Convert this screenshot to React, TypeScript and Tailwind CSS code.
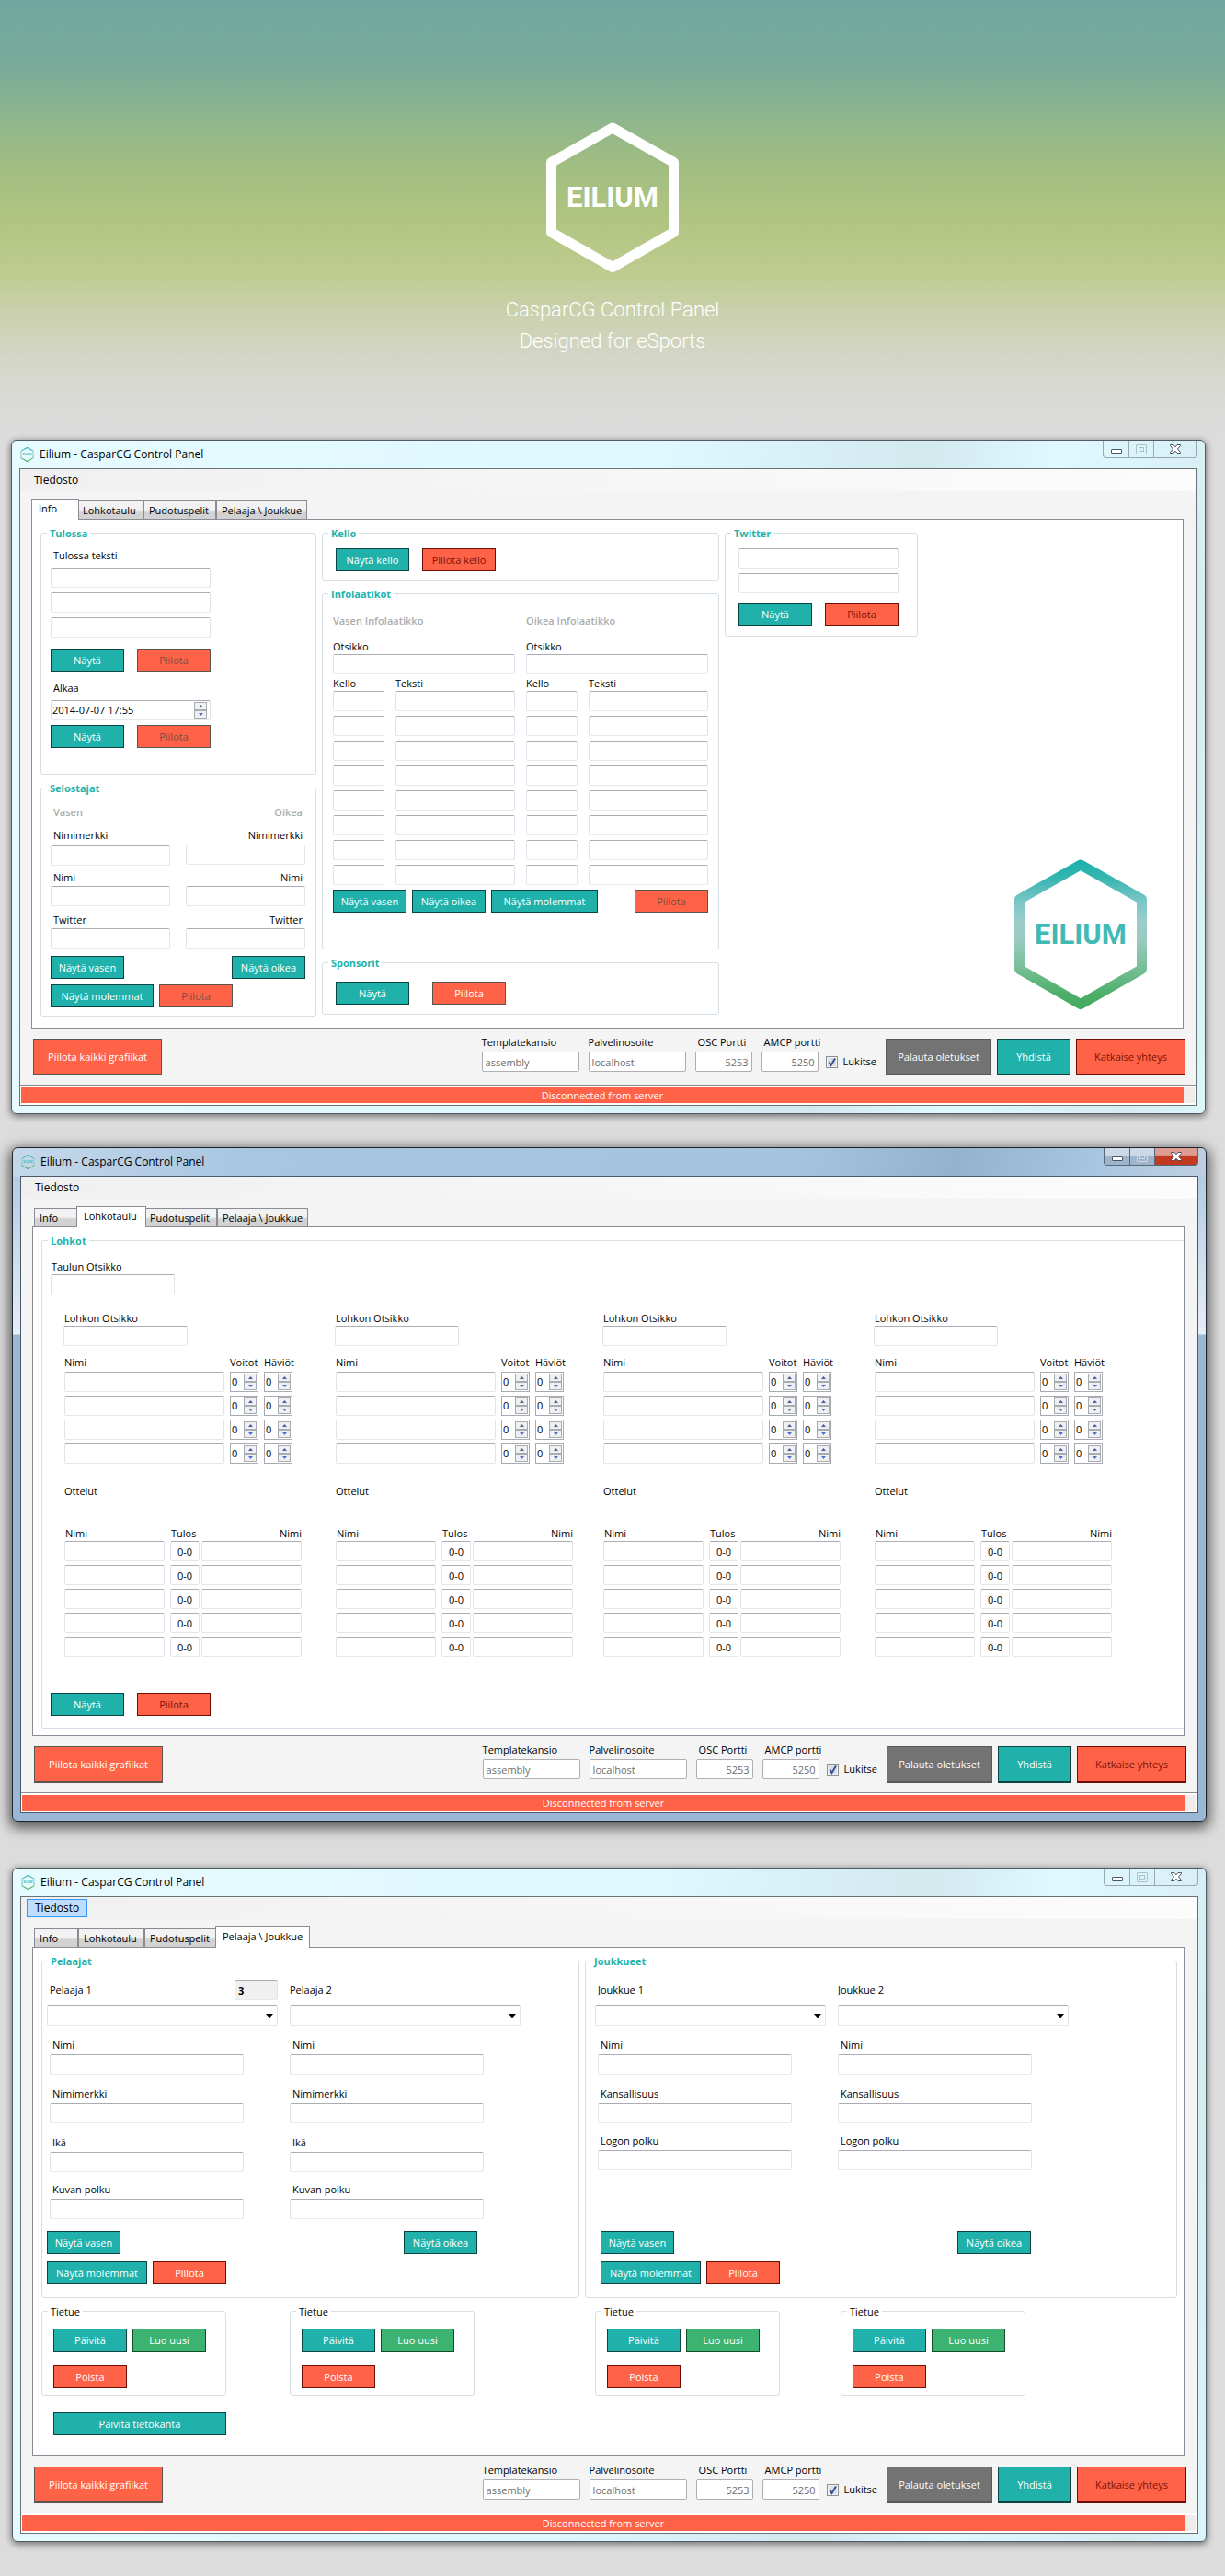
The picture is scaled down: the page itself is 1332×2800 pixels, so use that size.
import { useId, type ReactNode } from "react";
import clsx from "clsx";

type Theme = "light" | "blue";

const fieldEdge = "rounded-[2px] border border-x-[#e2e3ea] border-b-[#e3e9ef] border-t-[#abadb3]";
const fieldBorder = "rounded-[2px] border border-x-[#e2e3ea] border-b-[#e3e9ef] border-t-[#abadb3] bg-white";

function Hexagon({ gradient, small }: { gradient?: boolean; small?: boolean }) {
  const id = useId();
  return (
    <svg
      viewBox="0 0 144 163"
      className={small ? "h-4 w-[15px] shrink-0" : "h-[163px] w-36 shrink-0"}
      role="img"
      aria-label="Eilium"
    >
      <defs>
        <linearGradient id={id} x1="0" y1="0" x2="0" y2="163" gradientUnits="userSpaceOnUse">
          <stop offset="0.02" stopColor="#1fb0a9" />
          <stop offset="0.12" stopColor="#34b5b0" />
          <stop offset="0.28" stopColor="#7ac6c8" />
          <stop offset="0.42" stopColor="#9bcdcb" />
          <stop offset="0.54" stopColor="#97cbbf" />
          <stop offset="0.72" stopColor="#78bf97" />
          <stop offset="0.9" stopColor="#4eae69" />
          <stop offset="1" stopColor="#43a95e" />
        </linearGradient>
      </defs>
      <path
        d="M72 6 138.5 43.5V119.5L72 157.5 5.5 119.5V43.5Z"
        fill="none"
        stroke={gradient ? `url(#${id})` : "#ffffff"}
        strokeWidth="11"
        strokeLinejoin="round"
      />
      <text
        x="72"
        y="92"
        textAnchor="middle"
        fill={gradient ? "#41bab5" : "#ffffff"}
        fontSize="31"
        fontWeight="700"
        fontFamily="Roboto, sans-serif"
      >
        EILIUM
      </text>
    </svg>
  );
}

type Tone = "teal" | "green" | "gray" | "red" | "redDark" | "redMuted" | "redGray";

const tones: Record<Tone, string> = {
  teal: "border-[#0b4442] bg-[#20b2aa] text-white",
  green: "border-[#124d2c] bg-[#3cb371] text-white",
  gray: "border-[#585858] bg-[#737373] text-white",
  red: "border-[#6e0f05] bg-[#ff6347] text-white",
  redDark: "border-[#6e0f05] bg-[#ff6347] text-[#7b1208]",
  redMuted: "border-[#5c5450] bg-[#ff6347] text-[#7d4b40]",
  redGray: "border-[#5c5450] bg-[#ff6347] text-white",
};

function Btn({ tone = "teal", w = "w-20", big, children }: { tone?: Tone; w?: string; big?: boolean; children: ReactNode }) {
  return (
    <button
      type="button"
      className={clsx(
        "shrink-0 whitespace-nowrap border text-center text-[11px] leading-4",
        big ? "h-10 border-b-2" : "h-[25px]",
        tones[tone],
        w,
      )}
    >
      {children}
    </button>
  );
}

function Box({ w = "w-full", label, value, center, id }: { w?: string; label?: string; value?: string; center?: boolean; id?: string }) {
  return (
    <input
      id={id}
      type="text"
      aria-label={label}
      defaultValue={value}
      className={clsx("block h-[22px] min-w-0 px-[3px] text-[11px] leading-4 text-black", fieldBorder, center && "text-center", w)}
    />
  );
}

function Field({
  label,
  w = "w-full",
  gap = "gap-0",
  right,
  indent = "px-[3px]",
}: {
  label: string;
  w?: string;
  gap?: string;
  right?: boolean;
  indent?: string;
}) {
  const id = useId();
  return (
    <div className={clsx("flex flex-col", gap, w)}>
      <label htmlFor={id} className={clsx("leading-4", indent, right && "text-right")}>
        {label}
      </label>
      <Box id={id} />
    </div>
  );
}

function Group({ title, className, plain, children }: { title: string; className?: string; plain?: boolean; children: ReactNode }) {
  return (
    <fieldset className={clsx("shrink-0 rounded-[3px] border border-[#d5dfe5]", className)}>
      <legend className={clsx("ml-[6px] px-[3px] leading-[15px]", !plain && "font-bold text-[#24b3ab]")}>{title}</legend>
      {children}
    </fieldset>
  );
}

function Steppers({ label }: { label: string }) {
  const cls = "flex h-[9px] w-[14px] items-center justify-center border border-[#a9abb2] bg-[#f0f0f1]";
  return (
    <span className="flex shrink-0 flex-col">
      <button type="button" aria-label={`${label} +`} className={cls}>
        <svg viewBox="0 0 5 3" className="h-[3px] w-[5px]">
          <path d="M0 3 2.5 0 5 3Z" fill="#4a5fa8" />
        </svg>
      </button>
      <button type="button" aria-label={`${label} -`} className={cls}>
        <svg viewBox="0 0 5 3" className="h-[3px] w-[5px]">
          <path d="M0 0 2.5 3 5 0Z" fill="#4a6fd0" />
        </svg>
      </button>
    </span>
  );
}

function Counter({ label }: { label: string }) {
  return (
    <span className="flex h-[22px] w-[31px] items-center border border-[#a9abb2] bg-white pr-px">
      <input type="text" aria-label={label} defaultValue="0" className="w-[14px] min-w-0 pl-px text-[11px] leading-4" />
      <Steppers label={label} />
    </span>
  );
}

function Check() {
  const id = useId();
  return (
    <div className="ml-2 mr-[10px] mt-[29px] flex h-[14px] items-center gap-[6px]">
      <span className="relative flex size-[13px]">
        <input
          id={id}
          type="checkbox"
          defaultChecked
          className="peer size-[13px] appearance-none border border-[#8e8f8f] bg-[#d9dfe6] shadow-[inset_0_0_0_1px_#f4f4f4]"
        />
        <svg viewBox="0 0 13 13" className="pointer-events-none absolute inset-0 hidden size-[13px] peer-checked:block">
          <path d="M3.5 6.5 5.5 10 10 2.5" fill="none" stroke="#3f4f96" strokeWidth="2" />
        </svg>
      </span>
      <label htmlFor={id} className="leading-4">
        Lukitse
      </label>
    </div>
  );
}

function FooterField({ label, value, w, right }: { label: string; value: string; w: string; right?: boolean }) {
  const id = useId();
  return (
    <div className={clsx("flex flex-col gap-[2px] pt-[7px]", w)}>
      <label htmlFor={id} className={clsx("whitespace-nowrap leading-4", right && "pl-[3px]")}>
        {label}
      </label>
      <input
        id={id}
        type="text"
        disabled
        defaultValue={value}
        className={clsx(
          "block h-[22px] w-full min-w-0 rounded-[2px] border border-[#afafb3] bg-white px-[3px] text-[11px] leading-4 text-[#6d6d6d]",
          right && "text-right",
        )}
      />
    </div>
  );
}

function CaptionButtons({ theme }: { theme: Theme }) {
  const blue = theme === "blue";
  const edge = blue ? "border-[#56687c]" : "border-[#96a9ae]";
  const face = blue ? "bg-linear-to-b from-[#cdd9e6] from-45% to-[#9fb3c9] to-50%" : "";
  return (
    <div className={clsx("flex h-[19px] overflow-hidden rounded-b-[4px] border border-t-0", edge)}>
      <button type="button" aria-label="Minimize" className={clsx("flex w-7 items-end justify-center border-r pb-1", edge, face)}>
        <svg viewBox="0 0 12 5" className="h-[5px] w-3">
          <rect x="0.5" y="0.5" width="11" height="4" rx="0.5" fill="#fff" stroke="#4b5566" />
        </svg>
      </button>
      <button type="button" aria-label="Maximize" className={clsx("flex w-[27px] items-center justify-center border-r", edge, face)}>
        <svg viewBox="0 0 12 11" className="h-[11px] w-3" fill="none" stroke={blue ? "#cfd9e4" : "#adc2c7"}>
          <rect x="0.5" y="0.5" width="11" height="10" rx="0.5" />
          <rect x="3.5" y="3.5" width="5" height="4" />
        </svg>
      </button>
      <button
        type="button"
        aria-label="Close"
        className={clsx("flex w-[46px] items-center justify-center", blue && "bg-linear-to-b from-[#dc9d90] from-40% to-[#c13a20] to-50%")}
      >
        <svg viewBox="0 0 12 10" className="h-[10px] w-3">
          <path
            d="M0.500 0.500H4L6 2.800 8 0.500H11.500V1.500L8.500 5 11.500 8.500V9.500H8L6 7.200 4 9.500H0.500V8.500L3.500 5 0.500 1.500Z"
            fill="#fff"
            stroke="#4b5060"
          />
        </svg>
      </button>
    </div>
  );
}

const tabs = [
  { name: "Info", w: "w-12", activeW: "w-[52px]" },
  { name: "Lohkotaulu", w: "w-[72px]", activeW: "w-[76px]" },
  { name: "Pudotuspelit", w: "w-[79px]", activeW: "w-[83px]" },
  { name: "Pelaaja \\ Joukkue", w: "w-[99px]", activeW: "w-[103px]" },
];

function Window({
  theme = "light",
  tab,
  menuOpen,
  className,
  children,
}: {
  theme?: Theme;
  tab: number;
  menuOpen?: boolean;
  className: string;
  children: ReactNode;
}) {
  const blue = theme === "blue";
  return (
    <section
      className={clsx(
        "rounded-[6px] border px-2 pb-2",
        blue
          ? "border-[#20262e] bg-[linear-gradient(to_bottom,transparent_0,transparent_31px,#b4cce4_31px,#e6eef7_202px,#9ab8d6_203px,#9ab8d6_100%),linear-gradient(100deg,#c4d8ea_0,#a8c5e1_18%,#a5c3df_60%,#95b2cc_72%,#a7c4df_82%,#c3d3e2_94%)] shadow-[0_4px_14px_3px_rgba(0,0,0,0.6)]"
          : "border-[#525c60] bg-[linear-gradient(100deg,#e6fbff_0,#def8fe_50%,#d2e9ee_70%,#dff9ff_80%,#d6edf2_94%,#dcf6fb_100%)] shadow-[0_2px_7px_1px_rgba(0,0,0,0.45)]",
        className,
      )}
    >
      <header className="flex h-[30px] items-start justify-between">
        <div className="flex h-[30px] items-center gap-[6px] pl-px">
          <Hexagon gradient small />
          <h2 className="text-[12px] leading-4">Eilium - CasparCG Control Panel</h2>
        </div>
        <CaptionButtons theme={theme} />
      </header>
      <div className={clsx("border bg-[#f4f4f4]", blue ? "border-[#4b5b6b]" : "border-[#687377]")}>
        <nav className="flex h-6 items-center bg-linear-to-r from-[#f0f0f0] to-[#fcfcfc] pl-[6px]">
          <button
            type="button"
            className={clsx("h-5 border px-2 text-[12px] leading-4", menuOpen ? "border-[#3399ff] bg-[#bfddff]" : "border-transparent")}
          >
            Tiedosto
          </button>
        </nav>
        <div role="tablist" className="ml-[14px] mt-2 flex h-[22px] items-end">
          {tabs.map((t, i) => (
            <button
              key={t.name}
              type="button"
              role="tab"
              aria-selected={i === tab}
              className={clsx(
                "shrink-0 whitespace-nowrap border border-b-0 border-[#898c95] text-left text-[11px] leading-4",
                i === tab
                  ? "relative z-10 -mx-[2px] -mb-px h-[23px] bg-white pb-[2px] pl-[7px]"
                  : "h-5 bg-linear-to-b from-[#f2f2f2] from-45% to-[#d2d2d2] to-60% pl-[5px]",
                i === tab ? t.activeW : t.w,
              )}
            >
              {t.name}
            </button>
          ))}
        </div>
        <div role="tabpanel" className="ml-3 mr-[14px] min-h-[554px] border border-[#898c95] bg-white pl-[9px] pt-[7px]">
          {children}
        </div>
        <div className="flex h-[61px] items-start justify-between pl-[14px] pr-3">
          <div className="pt-[11px]">
            <Btn tone="redGray" w="w-[140px]" big>
              Piilota kaikki grafiikat
            </Btn>
          </div>
          <div className="flex items-start">
            <div className="flex gap-[10px]">
              <FooterField label="Templatekansio" value="assembly" w="w-[106px]" />
              <FooterField label="Palvelinosoite" value="localhost" w="w-[106px]" />
              <FooterField label="OSC Portti" value="5253" w="w-[62px]" right />
              <FooterField label="AMCP portti" value="5250" w="w-[62px]" right />
            </div>
            <Check />
            <div className="flex gap-[6px] pt-[11px]">
              <Btn tone="gray" w="w-[115px]" big>
                Palauta oletukset
              </Btn>
              <Btn w="w-20" big>
                Yhdistä
              </Btn>
              <Btn tone="redDark" w="w-[119px]" big>
                Katkaise yhteys
              </Btn>
            </div>
          </div>
        </div>
        <div className="border-t border-[#8a8c8e] bg-white py-[2px] pl-px pr-[2px]">
          <div className="bg-[#f0eceb] pr-3">
            <p className="h-[17px] bg-[#ff6347] text-center leading-[17px] text-white">Disconnected from server</p>
          </div>
        </div>
      </div>
    </section>
  );
}

function InfoColumn({ title }: { title: string }) {
  return (
    <div className="flex w-[198px] flex-col">
      <h3 className="font-semibold leading-4 text-[#adadad]">{title}</h3>
      <div className="mt-3">
        <Field label="Otsikko" indent="px-0" />
      </div>
      <div className="mt-[2px] grid grid-cols-[56px_130px] gap-x-3 leading-4">
        <span>Kello</span>
        <span>Teksti</span>
      </div>
      <div className="grid grid-cols-[56px_130px] gap-x-3 gap-y-[5px]">
        {Array.from({ length: 8 }, (_, i) => [
          <Box key={`k${i}`} label={`${title} kello ${i + 1}`} />,
          <Box key={`t${i}`} label={`${title} teksti ${i + 1}`} />,
        ])}
      </div>
    </div>
  );
}

function InfoTab() {
  const first = useId();
  const date = useId();
  return (
    <div className="flex gap-[6px]">
      <div className="flex w-[300px] shrink-0 flex-col gap-[7px]">
        <Group title="Tulossa" className="h-[270px]">
          <div className="flex flex-col pl-[10px] pt-[9px]">
            <label htmlFor={first} className="pl-[3px] leading-4">
              Tulossa teksti
            </label>
            <div className="mt-[5px] flex flex-col gap-[5px]">
              <Box w="w-[174px]" id={first} />
              <Box w="w-[174px]" label="Tulossa teksti 2" />
              <Box w="w-[174px]" label="Tulossa teksti 3" />
            </div>
            <div className="mt-3 flex gap-[14px]">
              <Btn>Näytä</Btn>
              <Btn tone="redMuted">Piilota</Btn>
            </div>
            <label htmlFor={date} className="mt-[10px] pl-[3px] leading-4">
              Alkaa
            </label>
            <div className={clsx("mt-[5px] flex h-[22px] w-[174px] items-center pr-[3px]", fieldBorder)}>
              <input id={date} type="text" defaultValue="2014-07-07 17:55" className="min-w-0 flex-1 pl-px text-[11px] leading-4" />
              <Steppers label="Alkaa" />
            </div>
            <div className="mt-[5px] flex gap-[14px]">
              <Btn>Näytä</Btn>
              <Btn tone="redMuted">Piilota</Btn>
            </div>
          </div>
        </Group>
        <Group title="Selostajat" className="h-[256px]">
          <div className="flex w-[287px] flex-col pl-[10px] pt-[11px]">
            <div className="flex justify-between px-[3px] font-semibold leading-4 text-[#adadad]">
              <span>Vasen</span>
              <span>Oikea</span>
            </div>
            <div className="mt-[9px] flex justify-between">
              <Field label="Nimimerkki" w="w-[130px]" gap="gap-[3px]" />
              <Field label="Nimimerkki" w="w-[130px]" gap="gap-[2px]" right />
            </div>
            <div className="mt-[5px] flex justify-between">
              <Field label="Nimi" w="w-[130px]" gap="gap-px" />
              <Field label="Nimi" w="w-[130px]" gap="gap-px" right />
            </div>
            <div className="mt-[7px] flex justify-between">
              <Field label="Twitter" w="w-[130px]" gap="gap-px" />
              <Field label="Twitter" w="w-[130px]" gap="gap-px" right />
            </div>
            <div className="mt-2 flex justify-between">
              <Btn>Näytä vasen</Btn>
              <Btn>Näytä oikea</Btn>
            </div>
            <div className="mt-[6px] flex gap-[6px]">
              <Btn w="w-[112px]">Näytä molemmat</Btn>
              <Btn tone="redMuted">Piilota</Btn>
            </div>
          </div>
        </Group>
      </div>

      <div className="flex w-[432px] shrink-0 flex-col gap-[7px]">
        <Group title="Kello" className="h-[59px]">
          <div className="flex gap-[14px] pl-[14px] pt-[9px]">
            <Btn>Näytä kello</Btn>
            <Btn tone="redDark">Piilota kello</Btn>
          </div>
        </Group>
        <Group title="Infolaatikot" className="h-[394px]">
          <div className="w-[419px] pl-[11px] pt-[14px]">
            <div className="flex gap-3">
              <InfoColumn title="Vasen Infolaatikko" />
              <InfoColumn title="Oikea Infolaatikko" />
            </div>
            <div className="mt-[5px] flex gap-[6px]">
              <Btn>Näytä vasen</Btn>
              <Btn>Näytä oikea</Btn>
              <Btn w="w-[116px]">Näytä molemmat</Btn>
              <div className="ml-auto">
                <Btn tone="redMuted">Piilota</Btn>
              </div>
            </div>
          </div>
        </Group>
        <Group title="Sponsorit" className="h-[64px]">
          <div className="flex gap-[25px] pl-[14px] pt-[13px]">
            <Btn>Näytä</Btn>
            <Btn tone="redGray">Piilota</Btn>
          </div>
        </Group>
      </div>

      <Group title="Twitter" className="h-[120px] w-[210px]">
        <div className="flex flex-col gap-[5px] pl-[14px] pt-[9px]">
          <Box w="w-[174px]" label="Twitter 1" />
          <Box w="w-[174px]" label="Twitter 2" />
          <div className="mt-[5px] flex gap-[14px]">
            <Btn>Näytä</Btn>
            <Btn tone="redDark">Piilota</Btn>
          </div>
        </div>
      </Group>

      <div className="ml-auto mr-[39px] flex flex-col justify-end pb-2">
        <Hexagon gradient />
      </div>
    </div>
  );
}

function Block({ n }: { n: number }) {
  return (
    <div className="flex flex-col">
      <Field label="Lohkon Otsikko" w="w-[135px]" indent="px-px" />
      <div className="mb-[2px] mt-[10px] grid grid-cols-[174px_31px_31px] gap-x-[6px] pl-px leading-4">
        <span>Nimi</span>
        <span>Voitot</span>
        <span>Häviöt</span>
      </div>
      <div className="grid grid-cols-[174px_31px_31px] gap-x-[6px] gap-y-1 pl-px">
        {Array.from({ length: 4 }, (_, i) => [
          <Box key={`n${i}`} label={`Lohko ${n} nimi ${i + 1}`} />,
          <Counter key={`v${i}`} label={`Lohko ${n} voitot ${i + 1}`} />,
          <Counter key={`h${i}`} label={`Lohko ${n} häviöt ${i + 1}`} />,
        ])}
      </div>
      <h3 className="mt-[22px] pl-px leading-4">Ottelut</h3>
      <div className="mt-[30px] grid grid-cols-[115px_34px_109px] pl-[2px] leading-4">
        <span>Nimi</span>
        <span>Tulos</span>
        <span className="pr-px text-right">Nimi</span>
      </div>
      <div className="flex flex-col gap-1 pl-px">
        {Array.from({ length: 5 }, (_, i) => (
          <div key={i} className="flex">
            <Box w="w-[109px]" label={`Lohko ${n} ottelu ${i + 1} vasen`} />
            <div className="ml-[6px] mr-[2px]">
              <Box w="w-8" center value="0-0" label={`Lohko ${n} ottelu ${i + 1} tulos`} />
            </div>
            <Box w="w-[109px]" label={`Lohko ${n} ottelu ${i + 1} oikea`} />
          </div>
        ))}
      </div>
    </div>
  );
}

function LohkoTab() {
  return (
    <Group title="Lohkot" className="h-[538px] rounded-r-none border-r-0">
      <div className="flex flex-col pl-[9px] pt-[13px]">
        <Field label="Taulun Otsikko" w="w-[135px]" indent="px-px" />
        <div className="mt-[18px] grid grid-cols-[295px_291px_295px_auto] pl-[14px]">
          {[1, 2, 3, 4].map((n) => (
            <Block key={n} n={n} />
          ))}
        </div>
        <div className="mt-[39px] flex gap-[14px]">
          <Btn>Näytä</Btn>
          <Btn tone="redDark">Piilota</Btn>
        </div>
      </div>
    </Group>
  );
}

function Picker({ label, badge, indent }: { label: string; badge?: string; indent: string }) {
  const id = useId();
  return (
    <div className="flex flex-col gap-[5px]">
      <div className={clsx("flex h-[22px] items-center justify-between", indent)}>
        <label htmlFor={id} className="leading-4">
          {label}
        </label>
        {badge && (
          <input
            type="text"
            readOnly
            aria-label="Tunniste"
            defaultValue={badge}
            className={clsx("h-[22px] w-[47px] bg-[#f0f0f0] px-[3px] text-[11px] font-bold", fieldEdge)}
          />
        )}
      </div>
      <span className="relative block">
        <select id={id} className={clsx("block h-[23px] w-[251px] appearance-none px-1 text-[11px]", fieldBorder)}>
          <option value=""></option>
        </select>
        <svg viewBox="0 0 8 5" className="pointer-events-none absolute right-[5px] top-[10px] h-[5px] w-2">
          <path d="M0 0H8L4 4.500Z" fill="#000" />
        </svg>
      </span>
    </div>
  );
}

function Person({ label, badge, fields, first }: { label: string; badge?: string; fields: string[]; first?: boolean }) {
  return (
    <div className="flex flex-col">
      <Picker label={label} badge={badge} indent={first ? "pl-[3px]" : "pl-0"} />
      <div className={clsx("mt-[13px] flex w-[214px] flex-col", first ? "pl-[3px]" : "pr-[3px]")}>
        {fields.map((f, i) => (
          <div key={f} className={clsx(i > 0 && (i === fields.length - 1 ? "mt-[11px]" : "mt-[13px]"))}>
            <Field label={f} gap="gap-[2px]" />
          </div>
        ))}
      </div>
    </div>
  );
}

function Record() {
  return (
    <Group title="Tietue" plain className="h-[99px] w-[201px]">
      <div className="grid grid-cols-[80px_80px] gap-x-[6px] gap-y-[15px] pl-3 pt-[11px]">
        <Btn>Päivitä</Btn>
        <Btn tone="green">Luo uusi</Btn>
        <Btn tone="red">Poista</Btn>
      </div>
    </Group>
  );
}

function PlayerTab() {
  const people = ["Nimi", "Nimimerkki", "Ikä", "Kuvan polku"];
  const teams = ["Nimi", "Kansallisuus", "Logon polku"];
  return (
    <div className="flex flex-col">
      <div className="flex gap-[6px]">
        <Group title="Pelaajat" className="h-[374px] w-[585px]">
          <div className="flex h-[344px] flex-col pl-[5px] pt-[13px]">
            <div className="flex gap-[13px]">
              <Person label="Pelaaja 1" badge="3" fields={people} first />
              <Person label="Pelaaja 2" fields={people} />
            </div>
            <div className="mt-auto flex w-[468px] justify-between">
              <Btn>Näytä vasen</Btn>
              <Btn>Näytä oikea</Btn>
            </div>
            <div className="mt-2 flex gap-[6px]">
              <Btn w="w-[109px]">Näytä molemmat</Btn>
              <Btn tone="red">Piilota</Btn>
            </div>
          </div>
        </Group>
        <Group title="Joukkueet" className="h-[374px] w-[644px]">
          <div className="flex h-[344px] flex-col pl-[10px] pt-[13px]">
            <div className="flex gap-[13px]">
              <Person label="Joukkue 1" fields={teams} first />
              <Person label="Joukkue 2" fields={teams} />
            </div>
            <div className="mt-auto flex w-[474px] justify-between pl-[6px]">
              <Btn>Näytä vasen</Btn>
              <Btn>Näytä oikea</Btn>
            </div>
            <div className="mt-2 flex gap-[6px] pl-[6px]">
              <Btn w="w-[109px]">Näytä molemmat</Btn>
              <Btn tone="red">Piilota</Btn>
            </div>
          </div>
        </Group>
      </div>
      <div className="mt-[7px] grid grid-cols-[270px_332px_267px_201px]">
        <Record />
        <Record />
        <Record />
        <Record />
      </div>
      <div className="mt-[18px] pl-[13px]">
        <Btn w="w-[188px]">Päivitä tietokanta</Btn>
      </div>
    </div>
  );
}

export default function App() {
  return (
    <main className="bg-[#dcdcdc] pb-[37px] font-['Open_Sans','Noto_Sans',sans-serif] text-[11px] text-black">
      <header className="flex h-[478px] flex-col items-center bg-[linear-gradient(to_bottom,#6fa79f_0,#79ab9b_70px,#8bb48f_120px,#9fbd82_175px,#b1c581_240px,#bfcc90_300px,#cbd1ae_340px,#d4d6c6_390px,#dadad8_440px,#dcdcdc_478px)] pt-[133px]">
        <h1>
          <Hexagon />
        </h1>
        <p className="mt-6 text-center font-[Roboto,sans-serif] text-[22px] font-light leading-[34px] text-white">
          CasparCG Control Panel
          <br />
          Designed for eSports
        </p>
      </header>
      <Window tab={0} className="ml-3 mr-[21px]">
        <InfoTab />
      </Window>
      <Window tab={1} theme="blue" className="ml-[13px] mr-5 mt-9">
        <LohkoTab />
      </Window>
      <Window tab={3} menuOpen className="ml-[13px] mr-5 mt-[50px]">
        <PlayerTab />
      </Window>
    </main>
  );
}
